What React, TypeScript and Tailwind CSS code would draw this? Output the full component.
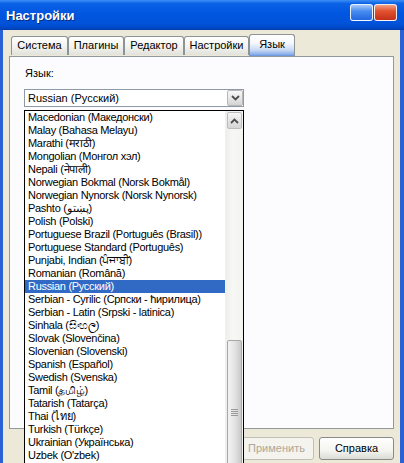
import React from "react";

const items = [
  "Macedonian (Македонски)",
  "Malay (Bahasa Melayu)",
  "Marathi (मराठी)",
  "Mongolian (Монгол хэл)",
  "Nepali (नेपाली)",
  "Norwegian Bokmal (Norsk Bokmål)",
  "Norwegian Nynorsk (Norsk Nynorsk)",
  "Pashto (پښتو)",
  "Polish (Polski)",
  "Portuguese Brazil (Português (Brasil))",
  "Portuguese Standard (Português)",
  "Punjabi, Indian (ਪੰਜਾਬੀ)",
  "Romanian (Română)",
  "Russian (Русский)",
  "Serbian - Cyrilic (Српски - ћирилица)",
  "Serbian - Latin (Srpski - latinica)",
  "Sinhala (සිංහල)",
  "Slovak (Slovenčina)",
  "Slovenian (Slovenski)",
  "Spanish (Español)",
  "Swedish (Svenska)",
  "Tamil (தமிழ்)",
  "Tatarish (Tatarça)",
  "Thai (ไทย)",
  "Turkish (Türkçe)",
  "Ukrainian (Українська)",
  "Uzbek (O'zbek)",
];

const tabs = [
  { label: "Система", w: "w-[57px]" },
  { label: "Плагины", w: "w-[56px]" },
  { label: "Редактор", w: "w-[60px]" },
  { label: "Настройки", w: "w-[65px]" },
];

function Chevron({ up }: { up?: boolean }) {
  return (
    <svg width="9" height="6" viewBox="0 0 9 6">
      <path
        d={up ? "M1 5 L4.5 1.5 L8 5" : "M1 1 L4.5 4.5 L8 1"}
        fill="none"
        stroke="#4D4D4D"
        strokeWidth="1.8"
      />
    </svg>
  );
}

export default function App() {
  return (
    <div
      className="w-[404px] h-[463px] overflow-hidden relative flex flex-col bg-[#ECE9D8] text-[11px] text-black"
      style={{ fontFamily: '"Liberation Sans", Arial, sans-serif' }}
    >
      {/* Title bar */}
      <div className="h-[30px] shrink-0 flex items-center justify-between pl-[6px] pr-[7px] bg-[linear-gradient(180deg,#3D8EF5_0%,#0A62E6_12%,#0056E0_45%,#0052D8_80%,#0046C4_94%,#003AA8_100%)]">
        <span className="text-white font-bold text-[13px] leading-none [text-shadow:1px_1px_0_#0A2A7A]">
          Настройки
        </span>
        <div className="flex gap-[1px] pb-[6px]">
          <div className="w-[23px] h-[17px] rounded-[3px] border border-white/90 bg-[linear-gradient(180deg,#A9C9F8_0%,#4A8DF0_40%,#2266E0_100%)]" />
          <div className="w-[23px] h-[17px] rounded-[3px] border border-white/90 bg-[linear-gradient(180deg,#F2A086_0%,#E2532E_40%,#C3301A_100%)]" />
        </div>
      </div>

      {/* Body */}
      <div className="flex-1 flex flex-col border-l-[3px] border-r-[4px] border-l-[#2A62D6] border-r-[#2A62D6] px-[6px] pt-[4px]">
        {/* Tabs */}
        <div className="h-[22px] flex items-end pl-[2px] relative z-10">
          {tabs.map((t) => (
            <div
              key={t.label}
              className={`${t.w} h-[19px] mb-[1px] border border-[#8C9496] border-b-0 rounded-t-[3px] bg-[linear-gradient(180deg,#FFFFFF_0%,#F3F3F0_50%,#E2E2DC_100%)] flex items-center justify-center text-[11px] leading-none pb-[1px]`}
            >
              {t.label}
            </div>
          ))}
          <div className="w-[46px] h-[22px] border border-[#8C9496] border-b-[#6E9BE0] rounded-t-[3px] bg-[linear-gradient(180deg,#FFFFFF_0%,#F6F8FC_40%,#C9DAF5_75%,#7FA7E8_100%)] flex items-start justify-center pt-[4px] text-[11px] leading-none">
            Язык
          </div>
        </div>

        {/* Panel */}
        <div className="h-[373px] shrink-0 border border-[#919B9C] bg-[#FCFCFE] pl-[14px] pt-[10px] flex flex-col">
          <div className="leading-[13px] pl-[1px]">Язык:</div>
          <div className="relative mt-[9px] w-[220px]">
            <div className="h-[18px] border border-[#8E9AA8] bg-white flex items-center">
              <span className="flex-1 pl-[3px] leading-[13px]">Russian (Русский)</span>
              <div className="w-[16px] h-[16px] border border-[#B8B8B8] rounded-[2px] bg-[linear-gradient(180deg,#F8F8F8_0%,#E4E4E4_60%,#D2D2D2_100%)] flex items-center justify-center">
                <Chevron />
              </div>
            </div>
            {/* Dropdown list overlay */}
            <div className="absolute left-0 top-[21px] w-[220px] h-[360px] border border-black bg-white flex overflow-hidden z-20">
              <div className="w-[200px] shrink-0 flex flex-col">
                {items.map((it) => {
                  const sel = it === "Russian (Русский)";
                  return (
                    <div
                      key={it}
                      className={`h-[13px] shrink-0 leading-[13px] pl-[3px] whitespace-nowrap tracking-[-0.3px] ${
                        sel ? "bg-[#316AC5] text-white" : ""
                      }`}
                    >
                      {it}
                    </div>
                  );
                })}
              </div>
              <div className="w-[18px] shrink-0 flex flex-col bg-[linear-gradient(90deg,#EEEEEA_0%,#F7F7F5_40%,#F3F3F0_100%)] border-l border-[#F0F0F0]">
                <div className="h-[17px] shrink-0 mt-[1px] mx-[1px] border border-[#BDBDBD] rounded-[2px] bg-[linear-gradient(180deg,#F6F6F6_0%,#E2E2E2_60%,#D4D4D4_100%)] flex items-center justify-center">
                  <Chevron up />
                </div>
                <div className="h-[211px] shrink-0" />
                <div className="h-[150px] shrink-0 mx-[1px] border border-[#A8A8A8] rounded-[2px] bg-[linear-gradient(90deg,#F2F2F2_0%,#E4E4E4_50%,#CACACA_100%)] flex flex-col items-center justify-start pt-[68px] gap-[1px]">
                  <div className="w-[7px] h-[1px] bg-[#9A9A9A]" />
                  <div className="w-[7px] h-[1px] bg-[#9A9A9A]" />
                  <div className="w-[7px] h-[1px] bg-[#9A9A9A]" />
                  <div className="w-[7px] h-[1px] bg-[#9A9A9A]" />
                </div>
              </div>
            </div>
          </div>
        </div>

        {/* Buttons */}
        <div className="flex justify-end gap-[5px] pt-[8px]">
          <div className="w-[75px] h-[23px] rounded-[3px] border border-[#C2C0B6] bg-[#F4F3EE] flex items-center justify-center text-[#ACA899]">
            Применить
          </div>
          <div className="w-[75px] h-[23px] rounded-[3px] border border-[#8A8A8A] bg-[linear-gradient(180deg,#FFFFFF_0%,#F4F4F0_60%,#DCDCD6_100%)] flex items-center justify-center">
            Справка
          </div>
        </div>
      </div>
    </div>
  );
}
